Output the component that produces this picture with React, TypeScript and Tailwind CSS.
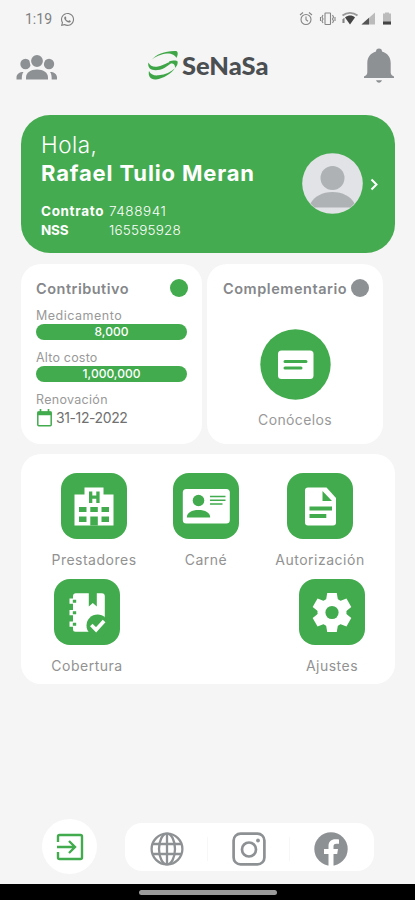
import type { ReactNode } from "react";
import { FaWhatsapp } from "react-icons/fa";

const GREEN = "#42ab4d";
const GREY = "#8e9194";

function Logo() {
  return (
    <div className="flex h-[32px] items-start">
      <svg width="33" height="32" viewBox="0 0 33 32" fill="#3fa648" className="shrink-0">
        <path d="M4 10.500C9 4 19 .5 29 1c2.500.5 2 4.500.3 7C28.500 5 24 3.200 20 3.500 14 4 8 6.500 4 10.500Z" />
        <path d="M1.300 12.500C3 16 6.500 17.200 11 16.500c6-1 9-5 17-5.300-5 1.500-8.500 7-15 8.500C6 21.200.3 19.500 1.300 12.500Z" />
        <path d="M22 11.500c4-1.500 7.500-1.300 8.500-.3.800 2.500-.8 5-2.500 6.800.3-3.500-1.500-4.700-5.500-5Z" />
        <path d="M2 21c1.500 3.500 5 4.800 9.500 4.300 7-.7 12.500-3.300 16.500-7-4 5.700-11.500 10.200-19 11.200C3.500 30 .8 26 2 21Z" />
      </svg>
      <span className="mt-[2px] ml-[1.500px] font-[Lato] text-[25.500px] leading-[27px] font-black text-[#4b4f52]">SeNaSa</span>
    </div>
  );
}

function People() {
  return (
    <svg width="42" height="28" viewBox="0 0 42 28" fill={GREY}>
      <circle cx="9.500" cy="10" r="5.200" />
      <circle cx="33" cy="10" r="5.200" />
      <path d="M.5 25.500v-2c0-3.500 3-5.500 7-5.500-1.300 1.700-1.700 3.500-1.700 7.500ZM41 25.500v-2c0-3.500-3-5.500-7-5.500 1.300 1.700 1.700 3.500 1.700 7.500Z" />
      <circle cx="21" cy="7" r="6.700" fill={GREY} stroke="#f5f5f5" strokeWidth="1.600" />
      <path d="M10 25.500v-2c0-5 4.500-8 11-8s11 3 11 8v2Z" />
    </svg>
  );
}

function Bell() {
  return (
    <svg width="32" height="37" viewBox="0 0 32 37" fill={GREY}>
      <path d="M13 3.500a3 3 0 0 1 6 0c5.500 1.500 8.700 6 8.700 11.500v9.500c0 2 1.300 3 3.300 4v1.500H1v-1.500c2-1 3.300-2 3.300-4V15C4.300 9.500 7.500 5 13 3.500ZM13 32.300h6c-.6 1.400-1.700 2.400-3 2.400s-2.400-1-3-2.400Z" />
    </svg>
  );
}

function StatusIcons() {
  return (
    <svg width="94" height="16" viewBox="0 0 94 16" fill="none" stroke="#858585" strokeWidth="1.100">
      <circle cx="7" cy="8.500" r="5" />
      <path d="M7 5.500v3.300l2 1.500M1 4l3-2.500M13 4l-3-2.500" />
      <rect x="26" y="2" width="5.500" height="11.500" rx=".5" />
      <path d="m24 4-1 2 1 2-1 2 1 2M33.500 4l1 2-1 2 1 2-1 2M21.500 6v4M36 6v4" />
      <path d="M43.500 4.500c4.500-3.600 10.500-3.600 15 0" strokeWidth="1.800" stroke="#999" />
      <path d="M46 6.500c3.500-2.600 7-2.600 10 0l-5 7Z" fill="#444" stroke="none" />
      <path d="M45 7v5m-1-4v4" />
      <path d="M76 1.500v12H62.500Z" fill="#bbb" stroke="none" />
      <path d="M70 6.800v6.700h-7.500Z" fill="#555" stroke="none" />
      <path d="M86 1.500h4v1h2v11h-8v-11h2Z" fill="#bbb" stroke="none" />
      <path d="M84 10.500h8v3h-8Z" fill="#444" stroke="none" />
    </svg>
  );
}

function Avatar() {
  return (
    <svg width="61" height="61" viewBox="0 0 61 61">
      <circle cx="30.500" cy="30.500" r="30.300" fill="#e2e3e6" />
      <circle cx="30.500" cy="25" r="12" fill="#aeb2b4" />
      <path d="M8.500 50.500c3.500-7 12-11.500 22-11.500s18.500 4.500 22 11.500L48.500 54.500h-36Z" fill="#aeb2b4" />
    </svg>
  );
}

function Calendar() {
  return (
    <svg width="17" height="18" viewBox="0 0 17 18" fill="none" stroke={GREEN}>
      <rect x="1.800" y="3" width="13.400" height="13.700" rx="1" strokeWidth="1.500" />
      <path d="M1.500 3.500h14M1.500 5.200h14" strokeWidth="2" />
      <path d="M4.500 0v4M12.500 0v4" strokeWidth="1.700" />
    </svg>
  );
}

const TOOTH = "m-6-12 1.200-7.500h9.600l1.200 7.500Z";

const icons: Record<string, ReactNode> = {
  hospital: (
    <>
      <path d="M23.500 14.500h19v7h10v31h-39v-31h10Z" fill="#fff" />
      <path d="M28 18.500h3.300v4h4v-4h3.300V30h-3.300v-4.300h-4V30H28ZM18 34h7.500v5H18ZM29.300 34h7.500v5h-7.500ZM40.500 34H48v5h-7.500ZM18 43.500h7.500v5.500H18ZM40.500 43.500H48v5.500h-7.500ZM29.300 43.500h7.500v9h-7.500Z" fill={GREEN} />
    </>
  ),
  card: (
    <>
      <rect x="9.800" y="16" width="47" height="34.500" rx="3.500" fill="#fff" />
      <circle cx="25.500" cy="27.500" r="5.800" fill={GREEN} />
      <path d="M13.800 44.500c0-5 5-7.500 11.700-7.500s11.700 2.500 11.700 7.500Z" fill={GREEN} />
      <path d="M37 23.500h15.500M37 27.300h15.500M37 31h12.500" stroke={GREEN} strokeWidth="1.500" />
    </>
  ),
  document: (
    <>
      <path d="M21 14.500h18.500L49 25v24.500a3 3 0 0 1-3 3H21a3 3 0 0 1-3-3v-32a3 3 0 0 1 3-3Z" fill="#fff" />
      <path d="M35.500 18v10H45ZM22.500 33.500H45v4H22.500ZM22.500 41h16.800v4H22.500Z" fill={GREEN} />
    </>
  ),
  notebook: (
    <>
      <path d="M21.500 14.300h13.300V27.500l4-3.500 4 3.500V14.300h5a3 3 0 0 1 3 3V39L39 52.700H21.500a2.500 2.500 0 0 1-2.500-2.500V17a2.700 2.700 0 0 1 2.500-2.700Z" fill="#fff" />
      <path d="M15.500 19.500h7v5.300h-7ZM15.500 31h7v5.300h-7ZM15.500 42.500h7v5.300h-7Z" fill="#fff" />
      <path d="M18.800 20.700h3.400v3h-3.400ZM18.800 32.200h3.400v3h-3.400ZM18.800 43.700h3.400v3h-3.400Z" fill={GREEN} />
      <circle cx="43.500" cy="46.500" r="11" fill={GREEN} />
      <path d="m37.300 46 4.800 4.800 8-8.800" fill="none" stroke="#fff" strokeWidth="3.600" />
    </>
  ),
  gear: (
    <g fill="#fff" transform="translate(33 33.500)">
      <circle r="14.500" />
      <path d={TOOTH} />
      <path d={TOOTH} transform="rotate(60)" />
      <path d={TOOTH} transform="rotate(120)" />
      <path d={TOOTH} transform="rotate(180)" />
      <path d={TOOTH} transform="rotate(240)" />
      <path d={TOOTH} transform="rotate(300)" />
      <circle r="6.600" fill={GREEN} />
    </g>
  ),
};

function Tile({ icon, label, className }: { icon: string; label: string; className: string }) {
  return (
    <div className={"flex flex-col items-center " + className}>
      <div className="size-[66px] rounded-[16px] bg-[#42ab4d]">
        <svg width="66" height="66" viewBox="0 0 66 66">{icons[icon]}</svg>
      </div>
      <span className="mt-[11px] h-[19px] text-[14px] leading-5 whitespace-nowrap text-[#929292]">{label}</span>
    </div>
  );
}

function Bar({ value }: { value: string }) {
  return (
    <div className="flex h-4 items-center justify-center rounded-full bg-[#42ab4d] text-[12px] leading-4 font-medium text-white">
      {value}
    </div>
  );
}

export default function App() {
  return (
    <div className="flex h-[900px] w-[415px] flex-col overflow-hidden bg-[#f5f5f5] font-['Inter',sans-serif]">
      <div className="flex h-[38px] items-center justify-between pr-[22px] pl-[25px] font-[Roboto]">
        <div className="flex items-center gap-2 text-[14px] text-[#808080]">
          <span>1:19</span>
          <FaWhatsapp size={15} />
        </div>
        <StatusIcons />
      </div>

      <header className="flex h-[76.500px] items-start justify-between pr-[20px] pl-[16px]">
        <div className="mt-[16px]"><People /></div>
        <div className="mt-[12px] mr-[5px]"><Logo /></div>
        <div className="mt-[10px]"><Bell /></div>
      </header>

      <section className="ml-[21px] flex h-[138.500px] w-[374px] shrink-0 rounded-[29px] bg-[#45ab50] pl-5 text-white">
        <div className="w-[261px] pt-[16px]">
          <p className="text-[22.500px] leading-7 font-light tracking-[0.5px]">Hola,</p>
          <p className="text-[22px] leading-7 font-bold tracking-[0.850px] whitespace-nowrap">Rafael Tulio Meran</p>
          <div className="mt-[15.500px] grid grid-cols-[68px_1fr] text-[13.500px] leading-[19px]">
            <span className="font-bold tracking-[0.650px]">Contrato</span>
            <span className="font-light tracking-[0.550px]">7488941</span>
            <span className="font-bold tracking-[-0.2px]">NSS</span>
            <span className="font-light tracking-[0.2px]">165595928</span>
          </div>
        </div>
        <div className="mt-[38.500px]"><Avatar /></div>
        <svg className="mt-[63px] ml-[7px]" width="10" height="13" viewBox="0 0 10 13" fill="none" stroke="#fff" strokeWidth="2">
          <path d="m1.500 1.500 5 5-5 5" />
        </svg>
      </section>

      <div className="mt-[10.500px] ml-[21px] flex h-[180px] shrink-0 gap-[5px]">
        <section className="w-[181px] rounded-[20px] bg-white pr-[15px] pl-[15px] text-[#999]">
          <div className="flex h-[36px] items-start justify-between pt-[15px]">
            <h2 className="text-[14.500px] leading-5 font-semibold tracking-[0.5px] text-[#85878a]">Contributivo</h2>
            <span className="mr-[-1px] size-[18px] rounded-full bg-[#42ab4d]" />
          </div>
          <p className="mt-[8px] text-[12.500px] leading-4 tracking-[0.5px]">Medicamento</p>
          <Bar value="8,000" />
          <p className="mt-[10px] text-[12.500px] leading-4 tracking-[0.2px]">Alto costo</p>
          <Bar value="1,000,000" />
          <p className="mt-[10px] text-[12.500px] leading-4 tracking-[0.3px]">Renovación</p>
          <div className="flex items-center gap-[3px]">
            <Calendar />
            <span className="text-[14px] leading-5 tracking-[-0.4px] text-[#707070]">31-12-2022</span>
          </div>
        </section>
        <section className="flex w-[176px] flex-col items-center rounded-[20px] bg-white">
          <div className="flex h-[36px] w-full items-start justify-between pt-[15px] pr-[14px] pl-4">
            <h2 className="text-[14.500px] leading-5 font-semibold tracking-[0.550px] text-[#85878a]">Complementario</h2>
            <span className="size-[18px] shrink-0 rounded-full bg-[#8e9194]" />
          </div>
          <svg className="mt-[29px] shrink-0" width="71" height="71" viewBox="0 0 71 71">
            <circle cx="35.500" cy="35.500" r="35.200" fill={GREEN} />
            <rect x="18" y="21.500" width="35.500" height="28.500" rx="3.500" fill="#fff" />
            <path d="M25 32.500h21M25 39h16" stroke={GREEN} strokeWidth="3" strokeLinecap="round" />
          </svg>
          <span className="mt-[10px] text-[14px] leading-5 tracking-[0.350px] text-[#999]">Conócelos</span>
        </section>
      </div>

      <section className="mt-[10px] ml-[21px] h-[230px] w-[374px] shrink-0 rounded-[20px] bg-white px-[30px] pt-[19.500px]">
        <div className="flex justify-between">
          <Tile icon="hospital" label="Prestadores" className="w-[86px] tracking-[0.5px]" />
          <Tile icon="card" label="Carné" className="w-[66px] tracking-[0.5px]" />
          <Tile icon="document" label="Autorización" className="w-[90px] tracking-[0.5px]" />
        </div>
        <div className="mt-[9.500px] flex justify-between">
          <Tile icon="notebook" label="Cobertura" className="w-[72px] tracking-[0.5px]" />
          <Tile icon="gear" label="Ajustes" className="w-[66px] tracking-[0.5px]" />
        </div>
      </section>

      <footer className="mt-auto flex h-[80px] shrink-0 items-start pl-[42px]">
        <div className="mt-[15px] flex size-[55px] items-center justify-center rounded-full bg-white">
          <svg width="28" height="28" viewBox="0 0 28 28" fill="none" stroke="#42ab4d" strokeWidth="2.400">
            <path d="M2 9V3.500A1.500 1.500 0 0 1 3.500 2h21A1.500 1.500 0 0 1 26 3.500v21a1.500 1.500 0 0 1-1.500 1.500h-21A1.500 1.500 0 0 1 2 24.500V19M1 14h18M13 8l6 6-6 6" />
          </svg>
        </div>
        <nav className="mt-[19px] ml-[28px] flex h-[48px] w-[249px] items-center rounded-[17px] bg-white pt-[4px] pr-[3px] pl-px">
          <div className="flex flex-1 justify-center">
            <svg width="34" height="34" viewBox="0 0 34 34" fill="none" stroke={GREY} strokeWidth="2.300">
              <circle cx="17" cy="17" r="15.400" />
              <ellipse cx="17" cy="17" rx="8" ry="15.400" />
              <path d="M17 1.500v31M3 12h28M3 22h28" />
            </svg>
          </div>
          <span className="h-6 w-px bg-[#f7f7f7]" />
          <div className="flex flex-1 justify-center">
            <svg width="34" height="34" viewBox="0 0 34 34" fill="none" stroke={GREY} strokeWidth="2.700">
              <rect x="1.600" y="1.600" width="30.800" height="30.800" rx="7" />
              <circle cx="17" cy="17.500" r="7" />
              <circle cx="26" cy="8.500" r="1.900" fill={GREY} stroke="none" />
            </svg>
          </div>
          <span className="h-6 w-px bg-[#f7f7f7]" />
          <div className="flex flex-1 justify-center">
            <svg width="34" height="34" viewBox="0 0 34 34">
              <circle cx="17" cy="17" r="16.700" fill={GREY} />
              <path d="M14.500 34V22H10v-5h4.500v-3c0-4.500 2.700-6.800 7-6.800 1.500 0 2.700.1 3.500.3v4.200h-2.500c-2.500 0-3 1.200-3 2.800V17H24l-.8 5h-3.700v12Z" fill="#fff" />
            </svg>
          </div>
        </nav>
      </footer>
      <div className="flex h-4 shrink-0 justify-center bg-black pt-[6px]">
        <div className="h-[5px] w-[138px] rounded-full bg-[#9b9b9b]" />
      </div>
    </div>
  );
}
